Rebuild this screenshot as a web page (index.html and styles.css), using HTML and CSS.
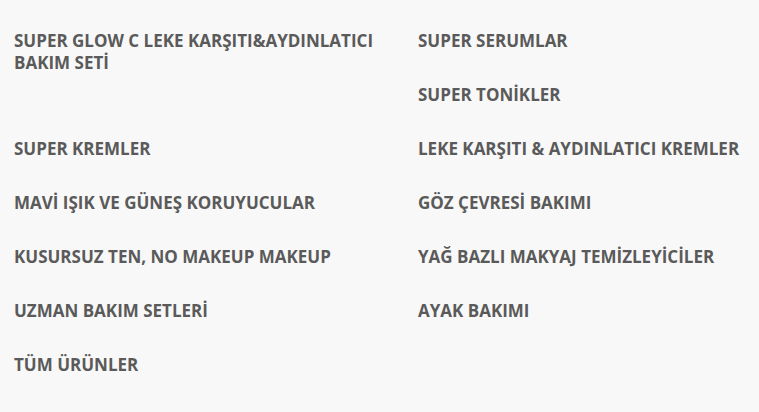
FILE: index.html
```html
<!DOCTYPE html>
<html lang="tr">
<head>
  <meta charset="UTF-8" />
  <meta name="viewport" content="width=device-width, initial-scale=1.0"/>
  <title>Kategoriler</title>
  <link rel="stylesheet" href="styles.css">
</head>
<body>
  <!-- Category menu, two columns -->
  <div class="menu">
    <ul class="menu-col left">
      <li class="tall"><a href="#">SUPER GLOW C LEKE KARŞITI&amp;AYDINLATICI BAKIM SETİ</a></li>
      <li><a href="#">SUPER KREMLER</a></li>
      <li><a href="#">MAVİ IŞIK VE GÜNEŞ KORUYUCULAR</a></li>
      <li><a href="#">KUSURSUZ TEN, NO MAKEUP MAKEUP</a></li>
      <li><a href="#">UZMAN BAKIM SETLERİ</a></li>
      <li><a href="#">TÜM ÜRÜNLER</a></li>
    </ul>
    <ul class="menu-col right">
      <li><a href="#">SUPER SERUMLAR</a></li>
      <li><a href="#">SUPER TONİKLER</a></li>
      <li><a href="#">LEKE KARŞITI &amp; AYDINLATICI KREMLER</a></li>
      <li><a href="#">GÖZ ÇEVRESİ BAKIMI</a></li>
      <li><a href="#">YAĞ BAZLI MAKYAJ TEMİZLEYİCİLER</a></li>
      <li><a href="#">AYAK BAKIMI</a></li>
    </ul>
  </div>
</body>
</html>
```

FILE: styles.css
```css
html, body {
  margin: 0;
  padding: 0;
  background: #f8f8f8;
  font-family: "Open Sans", Arial, sans-serif;
}

.menu {
  display: flex;
  padding: 14px 0 0 14px;
}

.menu-col {
  list-style: none;
  margin: 0;
  padding: 0;
}

.menu-col.left {
  width: 404px;
}

.menu-col li {
  box-sizing: border-box;
  padding: 16px 0;
  min-height: 54px;
  line-height: 22px;
}

/* first item wraps onto two lines and takes two rows */
.menu-col li.tall {
  min-height: 108px;
  padding-right: 20px;
}

.menu-col a {
  color: #5a5a5a;
  font-size: 17px;
  font-weight: 700;
  text-decoration: none;
}
```
